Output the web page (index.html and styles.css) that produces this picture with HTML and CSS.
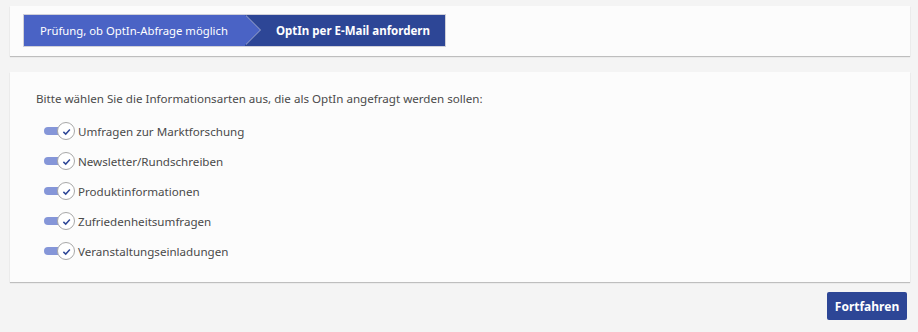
FILE: index.html
```html
<!DOCTYPE html>
<html lang="de">
<head>
    <meta charset="UTF-8">
    <meta name="viewport" content="width=device-width, initial-scale=1.0">
    <title>OptIn anfordern</title>
    <link rel="stylesheet" href="styles.css">
</head>
<body>
    <div class="page">
        <header class="card steps-card">
            <nav class="steps">
                <div class="step done">Prüfung, ob OptIn-Abfrage möglich</div>
                <div class="step current">OptIn per E-Mail anfordern</div>
            </nav>
        </header>
        <section class="card form-card">
            <p class="intro">Bitte wählen Sie die Informationsarten aus, die als OptIn angefragt werden sollen:</p>
            <ul class="options">
                <li class="option"><span class="toggle"><span class="knob"><svg viewBox="0 0 10 10"><path d="M2.6 5.3 L4.4 7 L7.6 3.4"/></svg></span></span>Umfragen zur Marktforschung</li>
                <li class="option"><span class="toggle"><span class="knob"><svg viewBox="0 0 10 10"><path d="M2.6 5.3 L4.4 7 L7.6 3.4"/></svg></span></span>Newsletter/Rundschreiben</li>
                <li class="option"><span class="toggle"><span class="knob"><svg viewBox="0 0 10 10"><path d="M2.6 5.3 L4.4 7 L7.6 3.4"/></svg></span></span>Produktinformationen</li>
                <li class="option"><span class="toggle"><span class="knob"><svg viewBox="0 0 10 10"><path d="M2.6 5.3 L4.4 7 L7.6 3.4"/></svg></span></span>Zufriedenheitsumfragen</li>
                <li class="option"><span class="toggle"><span class="knob"><svg viewBox="0 0 10 10"><path d="M2.6 5.3 L4.4 7 L7.6 3.4"/></svg></span></span>Veranstaltungseinladungen</li>
            </ul>
        </section>
        <div class="actions">
            <button class="btn-primary">Fortfahren</button>
        </div>
    </div>
</body>
</html>
```

FILE: styles.css
```css
body {
    margin: 0;
    padding: 0;
    background-color: #f4f4f4;
    font-family: "Noto Sans", "Open Sans", sans-serif;
    font-size: 11.6px;
    color: #4a4a4a;
}
.page {
    padding: 6px 8px 0 10px;
}
.card {
    background-color: #fcfcfc;
    box-shadow: 0 1px 1px rgba(0, 0, 0, 0.22);
}
.steps-card {
    padding: 8px 13px 9px;
}
.steps {
    display: flex;
    height: 33px;
    width: 423px;
    border: 1px solid #d0d0d8;
    box-sizing: border-box;
}
.step {
    display: flex;
    align-items: center;
    color: #fff;
    white-space: nowrap;
    box-sizing: border-box;
}
.step.done {
    position: relative;
    flex: 0 0 221px;
    padding-left: 16px;
    background-color: #4a63c5;
    font-size: 11.3px;
    z-index: 1;
}
.step.done:after {
    content: "";
    position: absolute;
    right: -15px;
    top: 0;
    border-top: 15.5px solid transparent;
    border-bottom: 15.5px solid transparent;
    border-left: 15px solid #4a63c5;
    filter: drop-shadow(1px 0 0 #9aa4c8);
}
.step.current {
    flex-grow: 1;
    padding-left: 31px;
    background-color: #2d4696;
    font-size: 11.5px;
    font-weight: bold;
}
.form-card {
    margin-top: 16px;
    padding: 19px 26px 14px;
    height: 177px;
}
.intro {
    margin: 0 0 9px;
    line-height: 16px;
}
.options {
    list-style: none;
    margin: 0;
    padding: 0;
}
.option {
    display: flex;
    align-items: center;
    height: 30px;
}
.toggle {
    position: relative;
    flex: 0 0 22px;
    height: 8px;
    margin-left: 8px;
    margin-right: 12px;
    border-radius: 4px;
    background-color: #8596d8;
}
.knob {
    position: absolute;
    right: -9px;
    top: -5px;
    width: 18px;
    height: 18px;
    border: 1px solid #a8a8a8;
    border-radius: 50%;
    background-color: #fff;
    box-sizing: border-box;
    display: flex;
    align-items: center;
    justify-content: center;
}
.knob svg {
    width: 13px;
    height: 13px;
    fill: none;
    stroke: #2d4696;
    stroke-width: 1.1;
}
.actions {
    display: flex;
    justify-content: flex-end;
    padding: 10px 3px 0 0;
}
.btn-primary {
    width: 80px;
    height: 28px;
    border: none;
    border-radius: 2px;
    background-color: #2d4696;
    color: #fff;
    font-family: "Noto Sans", "Open Sans", sans-serif;
    font-size: 12px;
    font-weight: bold;
    cursor: pointer;
}
```
